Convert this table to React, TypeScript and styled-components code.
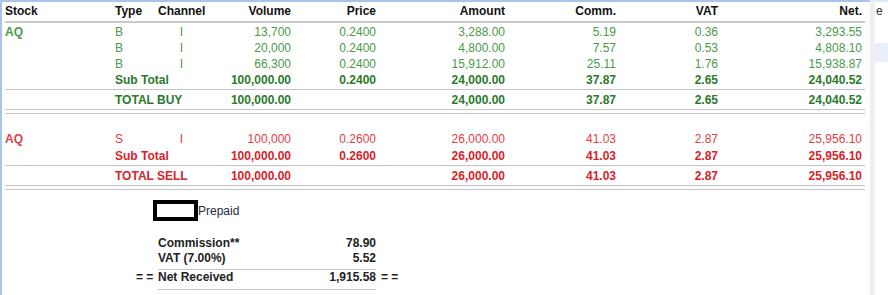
import React from "react";
import styled, { createGlobalStyle } from "styled-components";

const Global = createGlobalStyle`
  html, body { margin: 0; padding: 0; background: #fff; }
  body { font-family: "Liberation Sans", Arial, sans-serif; font-size: 12px; }
`;

const Screen = styled.div`
  display: flex;
  width: 888px;
  height: 295px;
  overflow: hidden;
`;

const MainPane = styled.div`
  width: 870px;
  height: 295px;
  border-top: 2px solid #a8c4ea;
  border-left: 2px solid #a8c4ea;
  padding-left: 3px;
  box-sizing: border-box;
`;

const SidePane = styled.div`
  flex: 1;
  border-left: 5px solid #eeeeee;
  background: #fff;
  overflow: hidden;
`;

const SideHead = styled.div`
  height: 19px;
  line-height: 19px;
  padding-left: 1px;
  color: #333;
  border-top: 2px solid #dfe8f5;
`;

const SideBand = styled.div<{ $top: number }>`
  height: 19px;
  margin-top: ${(p) => p.$top}px;
  background: #e8effa;
`;

const COLS = "110px 43px 47px 86px 85px 129px 111px 102px 144px";

const Row = styled.div<{ $tone?: "head" | "buy" | "sell"; $bold?: boolean; $h?: number }>`
  display: grid;
  grid-template-columns: ${COLS};
  height: ${(p) => p.$h ?? 16}px;
  line-height: ${(p) => p.$h ?? 16}px;
  font-weight: ${(p) => (p.$bold || p.$tone === "head" ? "bold" : "normal")};
  color: ${(p) =>
    p.$tone === "head"
      ? "#111"
      : p.$tone === "sell"
      ? p.$bold
        ? "#d8232a"
        : "#e03c44"
      : p.$bold
      ? "#2b7a2b"
      : "#4a9a4a"};
  white-space: nowrap;
`;

const Cell = styled.div<{ $align?: "left" | "right" | "center"; $span?: number; $bold?: boolean }>`
  text-align: ${(p) => p.$align ?? "right"};
  grid-column: span ${(p) => p.$span ?? 1};
  font-weight: ${(p) => (p.$bold ? "bold" : "inherit")};
`;

const Rule = styled.div<{ $w?: number; $c?: string; $mt?: number }>`
  width: 860px;
  height: ${(p) => p.$w ?? 1}px;
  background: ${(p) => p.$c ?? "#c4c4c4"};
  margin-top: ${(p) => p.$mt ?? 0}px;
`;

const Spacer = styled.div<{ $h: number }>`
  height: ${(p) => p.$h}px;
`;

const Summary = styled.div`
  padding-left: 131px;
  color: #222;
`;

const PrepaidLine = styled.div`
  display: flex;
  align-items: center;
  margin-left: 17px;
  height: 21px;
`;

const Box = styled.div`
  width: 37px;
  height: 13px;
  border: 4px solid #000;
  background: #fff;
`;

const PrepaidText = styled.span`
  color: #1d2b3a;
  margin-top: 1px;
`;

const SumList = styled.div`
  margin-top: 15px;
  display: flex;
  flex-direction: column;
`;

const SumRow = styled.div`
  display: flex;
  height: 15px;
  line-height: 15px;
  font-weight: bold;
  white-space: nowrap;
`;

const Affix = styled.span<{ $side: "pre" | "post" }>`
  width: ${(p) => (p.$side === "pre" ? 22 : 30)}px;
  padding-left: ${(p) => (p.$side === "pre" ? 0 : 5)}px;
  box-sizing: border-box;
`;

const Body = styled.div`
  width: 218px;
  display: flex;
  justify-content: space-between;
`;

const SumRule = styled.div<{ $mt: number; $mb: number }>`
  margin: ${(p) => p.$mt}px 0 ${(p) => p.$mb}px 22px;
  width: 218px;
  height: 1px;
  background: #c4c4c4;
`;

type Line = {
  stock?: string;
  type: string;
  ch?: string;
  vol: string;
  price: string;
  amt: string;
  comm: string;
  vat: string;
  net: string;
};

const buys: Line[] = [
  { stock: "AQ", type: "B", ch: "I", vol: "13,700", price: "0.2400", amt: "3,288.00", comm: "5.19", vat: "0.36", net: "3,293.55" },
  { type: "B", ch: "I", vol: "20,000", price: "0.2400", amt: "4,800.00", comm: "7.57", vat: "0.53", net: "4,808.10" },
  { type: "B", ch: "I", vol: "66,300", price: "0.2400", amt: "15,912.00", comm: "25.11", vat: "1.76", net: "15,938.87" },
];

const sells: Line[] = [
  { stock: "AQ", type: "S", ch: "I", vol: "100,000", price: "0.2600", amt: "26,000.00", comm: "41.03", vat: "2.87", net: "25,956.10" },
];

function DataRow({ l, tone }: { l: Line; tone: "buy" | "sell" }) {
  return (
    <Row $tone={tone}>
      <Cell $align="left" $bold>{l.stock ?? ""}</Cell>
      <Cell $align="left">{l.type}</Cell>
      <Cell $align="center">{l.ch}</Cell>
      <Cell>{l.vol}</Cell>
      <Cell>{l.price}</Cell>
      <Cell>{l.amt}</Cell>
      <Cell>{l.comm}</Cell>
      <Cell>{l.vat}</Cell>
      <Cell>{l.net}</Cell>
    </Row>
  );
}

type Totals = {
  label: string;
  tone: "buy" | "sell";
  vol: string;
  price: string;
  amt: string;
  comm: string;
  vat: string;
  net: string;
};

function TotalRow({ label, tone, vol, price, amt, comm, vat, net }: Totals) {
  return (
    <Row $tone={tone} $bold>
      <Cell />
      <Cell $align="left" $span={2}>{label}</Cell>
      <Cell>{vol}</Cell>
      <Cell>{price}</Cell>
      <Cell>{amt}</Cell>
      <Cell>{comm}</Cell>
      <Cell>{vat}</Cell>
      <Cell>{net}</Cell>
    </Row>
  );
}

export default function App() {
  return (
    <>
      <Global />
      <Screen>
        <MainPane>
          <Row $tone="head" $h={19}>
            <Cell $align="left">Stock</Cell>
            <Cell $align="left">Type</Cell>
            <Cell $align="left">Channel</Cell>
            <Cell>Volume</Cell>
            <Cell>Price</Cell>
            <Cell>Amount</Cell>
            <Cell>Comm.</Cell>
            <Cell>VAT</Cell>
            <Cell>Net.</Cell>
          </Row>
          <Rule $w={2} $c="#cacaca" />
          <Spacer $h={1} />
          {buys.map((l, i) => (
            <DataRow key={i} l={l} tone="buy" />
          ))}
          <TotalRow label="Sub Total" tone="buy" vol="100,000.00" price="0.2400" amt="24,000.00" comm="37.87" vat="2.65" net="24,040.52" />
          <Rule $mt={1} />
          <Spacer $h={2} />
          <TotalRow label="TOTAL BUY" tone="buy" vol="100,000.00" price="" amt="24,000.00" comm="37.87" vat="2.65" net="24,040.52" />
          <Rule $mt={1} />
          <Rule $mt={3} />
          <Spacer $h={17} />
          {sells.map((l, i) => (
            <DataRow key={i} l={l} tone="sell" />
          ))}
          <Spacer $h={1} />
          <TotalRow label="Sub Total" tone="sell" vol="100,000.00" price="0.2600" amt="26,000.00" comm="41.03" vat="2.87" net="25,956.10" />
          <Rule $mt={1} />
          <Spacer $h={2} />
          <TotalRow label="TOTAL SELL" tone="sell" vol="100,000.00" price="" amt="26,000.00" comm="41.03" vat="2.87" net="25,956.10" />
          <Rule $mt={1} />
          <Rule $mt={3} />
          <Summary>
            <Spacer $h={10} />
            <PrepaidLine>
              <Box />
              <PrepaidText>Prepaid</PrepaidText>
            </PrepaidLine>
            <SumList>
              <SumRow>
                <Affix $side="pre" />
                <Body>
                  <span>Commission**</span>
                  <span>78.90</span>
                </Body>
              </SumRow>
              <SumRow>
                <Affix $side="pre" />
                <Body>
                  <span>VAT (7.00%)</span>
                  <span>5.52</span>
                </Body>
              </SumRow>
              <SumRule $mt={3} $mb={0} />
              <SumRow>
                <Affix $side="pre">= =</Affix>
                <Body>
                  <span>Net Received</span>
                  <span>1,915.58</span>
                </Body>
                <Affix $side="post">= =</Affix>
              </SumRow>
              <SumRule $mt={4} $mb={0} />
            </SumList>
          </Summary>
        </MainPane>
        <SidePane>
          <SideHead>e</SideHead>
          <SideBand $top={22} />
        </SidePane>
      </Screen>
    </>
  );
}
